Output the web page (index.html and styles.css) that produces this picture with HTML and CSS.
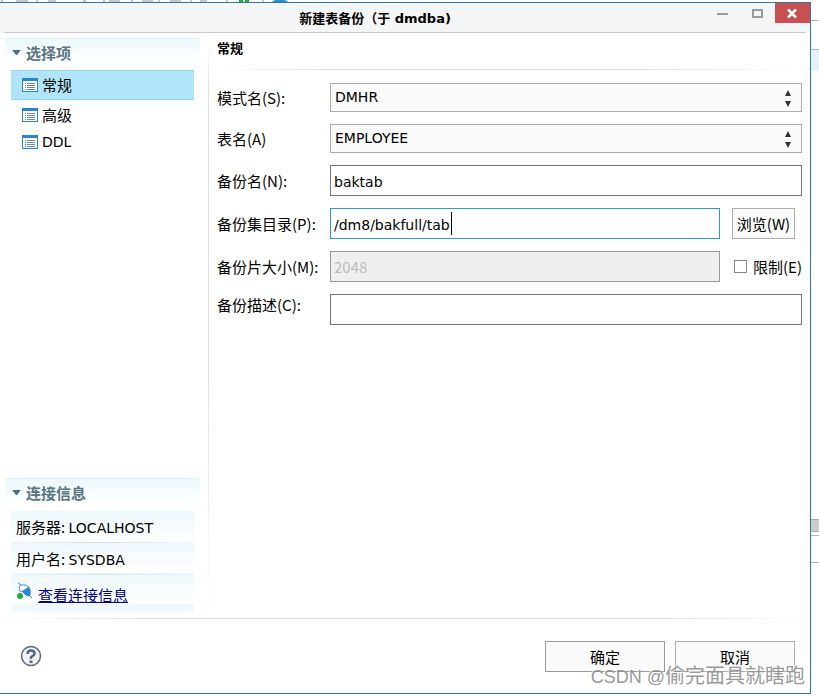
FILE: index.html
```
<!DOCTYPE html>
<html lang="zh-CN">

<head>
    <meta charset="utf-8">
    <title>新建表备份</title>
    <link rel="stylesheet" href="styles.css">
</head>

<body>

    <svg class="toolbar" width="819" height="2" viewBox="0 0 819 2">
        <path d="M2 0v2M37 0v2M104 0v2M132 0v2M159 0v2M191 0v2M227 0v2M263 0v2" stroke="#8a9399" fill="none"/>
        <path d="M16 1h12M48 1h8M83 1h3M109 1h11M142 1h11M170 1h11M200 1h7" stroke="#c9c9c9" stroke-width="2"/>
        <path d="M239 1h4M245 1h4" stroke="#22aa3c" stroke-width="2"/>
        <path d="M272 2q2-2 4-2h8q2 0 4 2z" fill="#2d88dc"/>
    </svg>

    <div class="screen">
        <div class="dialog">

            <div class="titlebar">
                <h1>新建表备份（于 dmdba)</h1>
                <div class="controls">
                    <button type="button" aria-label="最小化"><svg width="35" height="20"><path d="M12 11h11" stroke="#9b9b9d" stroke-width="2"/></svg></button>
                    <button type="button" aria-label="最大化"><svg width="35" height="20"><path d="M13 7h9v7h-9z" fill="none" stroke="#9b9b9d" stroke-width="2"/></svg></button>
                    <button type="button" class="close" aria-label="关闭"><svg width="35" height="20"><path d="M13 6.500l8 8M21 6.500l-8 8" stroke="#fff" stroke-width="2.500"/></svg></button>
                </div>
            </div>

            <div class="main">
                <div class="sidebar">
                    <div class="section">
                        <h2><svg width="9" height="5"><path d="M0 0h9L5 5H4z" fill="#4f7282"/></svg>选择项</h2>
                        <ul class="options">
                            <li class="selected">
                                <svg width="16" height="14"><path d="M0 0h16v14H0z" fill="#2b83d6"/><path d="M1 3h14v10H1z" fill="#fff"/><path d="M3 5.500h1M3 7.500h1M3 9.500h1M3 11.500h1M5 5.500h8M5 7.500h8M5 9.500h8M5 11.500h8" stroke="#7389a0"/></svg>常规
                            </li>
                            <li>
                                <svg width="16" height="14"><path d="M0 0h16v14H0z" fill="#2b83d6"/><path d="M1 3h14v10H1z" fill="#fff"/><path d="M3 5.500h1M3 7.500h1M3 9.500h1M3 11.500h1M5 5.500h8M5 7.500h8M5 9.500h8M5 11.500h8" stroke="#7389a0"/></svg>高级
                            </li>
                            <li class="latin">
                                <svg width="16" height="14"><path d="M0 0h16v14H0z" fill="#2b83d6"/><path d="M1 3h14v10H1z" fill="#fff"/><path d="M3 5.500h1M3 7.500h1M3 9.500h1M3 11.500h1M5 5.500h8M5 7.500h8M5 9.500h8M5 11.500h8" stroke="#7389a0"/></svg>DDL
                            </li>
                        </ul>
                    </div>

                    <div class="section">
                        <h2><svg width="9" height="5"><path d="M0 0h9L5 5H4z" fill="#4f7282"/></svg>连接信息</h2>
                        <div class="connection">
                            <p>服务器: <span class="latin">LOCALHOST</span></p>
                            <p>用户名: <span class="latin">SYSDBA</span></p>
                            <p class="view">
                                <svg width="17" height="18" viewBox="0 0 17 18">
                                    <path d="M2 1l3 2M12 12l4 4" stroke="#2b83d6"/>
                                    <path d="M4 9Q2 4 5 3q5-1 8 2l-7 5z" fill="#fff" stroke="#3c92de"/>
                                    <path d="M6 9l7-4q3 4 1 9-5 1-8-5z" fill="#2b83d6"/>
                                    <circle cx="4" cy="14" r="3" fill="#22aa3c"/>
                                </svg>
                                <a href="#">查看连接信息</a>
                            </p>
                        </div>
                    </div>
                </div>

                <div class="divider"></div>

                <div class="content">
                    <h3>常规</h3>
                    <form class="form">
                        <label for="schema">模式名(S):</label>
                        <div class="select wide">
                            <select id="schema"><option>DMHR</option></select>
                            <svg width="6" height="17"><path d="M3 0l3 6H0zM0 11h6l-3 6z" fill="#333"/></svg>
                        </div>

                        <label for="table">表名(A)</label>
                        <div class="select wide">
                            <select id="table"><option>EMPLOYEE</option></select>
                            <svg width="6" height="17"><path d="M3 0l3 6H0zM0 11h6l-3 6z" fill="#333"/></svg>
                        </div>

                        <label for="name">备份名(N):</label>
                        <input class="wide" id="name" type="text" value="baktab">

                        <label for="path">备份集目录(P):</label>
                        <div class="path">
                            <input class="active" id="path" type="text" value="/dm8/bakfull/tab">
                            <span class="caret"></span>
                        </div>
                        <button type="button" class="browse">浏览(W)</button>

                        <label for="size">备份片大小(M):</label>
                        <input id="size" type="text" value="2048" disabled>
                        <label class="limit"><input type="checkbox">限制(E)</label>

                        <label class="top" for="desc">备份描述(C):</label>
                        <input class="wide" id="desc" type="text">
                    </form>
                </div>
            </div>

            <div class="footer">
                <button type="button" class="help" aria-label="帮助">
                    <svg width="22" height="22" viewBox="0 0 22 22">
                        <circle cx="11" cy="11" r="9.500" fill="#f2f2f3" stroke="#5c6980" stroke-width="1.500"/>
                        <path d="M7.500 9Q7.500 5.500 11 5.500T14.500 8.500Q14.500 10 12.500 11T11 14" fill="none" stroke="#566783" stroke-width="2.500"/>
                        <path d="M9.500 15.500h3V18h-3z" fill="#566783"/>
                    </svg>
                </button>
                <button type="button" class="ok">确定</button>
                <button type="button">取消</button>
            </div>

        </div>

        <div class="behind">
            <div class="tabs"></div>
            <div class="row"></div>
            <div class="scroll"></div>
            <div class="pane"></div>
        </div>
    </div>

    <div class="watermark"><span>CSDN @</span>偷完面具就瞎跑</div>

</body>

</html>
```
FILE: styles.css
```
*{
    box-sizing: border-box;
}

body{
    margin: 0;
    min-height: 100vh;
    display: flex;
    flex-direction: column;
    overflow: hidden;
    background: white;
    color: black;
    font: 15px/22px "Noto Sans CJK SC", sans-serif;
}

h1, h2, h3, p, ul{
    margin: 0;
    padding: 0;
}

button, input, select{
    font: inherit;
    color: inherit;
    margin: 0;
    border-radius: 0;
}

svg{
    display: block;
    flex: none;
}

.toolbar{
    max-width: 100%;
}

.screen{
    flex: 1;
    display: flex;
    padding-bottom: 2px;
}

.dialog{
    flex: 1;
    display: flex;
    flex-direction: column;
    border: 1px solid #2b7d97;
    border-left: 0;
}

/* title bar */

.titlebar{
    display: flex;
    height: 30px;
    padding-left: 45px;
    background: linear-gradient(#c8c8c8, #c8c8c8) 5px 100% / calc(100% - 10px) 1px no-repeat #f4f5f7;
}

.titlebar h1{
    flex: 1;
    text-align: center;
    font: bold 13px/32px "DejaVu Sans", "Noto Sans CJK SC", sans-serif;
}

.controls{
    display: flex;
    align-items: flex-start;
}

.controls button{
    padding: 0;
    border: 0;
    background: none;
}

.controls .close{
    background: #c75050;
}

/* sidebar */

.main{
    flex: 1;
    display: flex;
    padding: 5px 8px 5px 5px;
}

.sidebar{
    width: 195px;
    display: flex;
    flex-direction: column;
    justify-content: space-between;
}

.section h2{
    display: flex;
    align-items: center;
    gap: 5px;
    height: 28px;
    padding: 0 7px;
    border-top: 1px solid #d8f3f8;
    border-radius: 4px;
    background: linear-gradient(#edf9fe, white);
    color: #5a7580;
    font-size: 15px;
    line-height: 22px;
}

.options{
    list-style: none;
    margin: 4px 6px 0;
}

.options li{
    display: flex;
    align-items: center;
    gap: 4px;
    height: 30px;
    padding-left: 11px;
}

.options .selected{
    background: #b0e5f9;
    border: solid #95d9ee;
    border-width: 1px 0;
}

.options .latin{
    height: 24px;
}

.latin{
    font-family: "DejaVu Sans", sans-serif;
    font-size: 14px;
}

.connection{
    margin: 5px 6px 0;
    padding-bottom: 5px;
    background: repeating-linear-gradient(#edf8fe, white 31px);
}

.connection p{
    height: 32px;
    padding: 5px 5px 0;
    border-bottom: 1px solid;
    border-image: linear-gradient(90deg, transparent, #d9dde0 50%, transparent) 1;
}

.connection .view{
    display: flex;
    gap: 5px;
    height: 33px;
    padding-top: 7px;
    border: 0;
}

.view a{
    padding-top: 2px;
    color: #000080;
}

.divider{
    width: 1px;
    margin: 0 8px;
    background: linear-gradient(white, #e0e0e0 10%, #e0e0e0 60%, white);
}

/* form */

.content{
    flex: 1;
}

.content h3{
    height: 32px;
    font-size: 13px;
    line-height: 20px;
    border-bottom: 1px solid;
    border-image: linear-gradient(90deg, transparent, #dedede 20%, #dedede 70%, transparent) 1;
}

.form{
    display: grid;
    grid-template-columns: 101px 1fr 70px;
    gap: 12px;
    align-items: center;
    padding-top: 13px;
}

.form label{
    white-space: nowrap;
}

.form .top{
    align-self: start;
}

.wide{
    grid-column: 2 / 4;
}

.select{
    position: relative;
}

.select select{
    display: block;
    appearance: none;
    width: 100%;
    height: 29px;
    padding: 0 4px 2px;
    border: 1px solid #adadad;
    background: #fafafa;
    font: 14px "DejaVu Sans", sans-serif;
}

.select svg{
    position: absolute;
    right: 11px;
    top: 7px;
    pointer-events: none;
}

input[type=text]{
    display: block;
    width: 100%;
    height: 31px;
    padding: 2px 3px 0;
    border: 1px solid #767676;
    background: white;
    font: 14px "DejaVu Sans", sans-serif;
    outline: 0;
}

input[type=text].wide{
    width: auto;
}

input[type=text].active{
    border-color: #3399bb;
}

input[type=text]:disabled{
    padding-top: 0;
    border-color: #999;
    background: #efefef;
    color: #bbb;
    font: 15px "Noto Sans CJK SC", sans-serif;
}

.path{
    position: relative;
}

.caret{
    position: absolute;
    left: 121px;
    top: 4px;
    width: 1px;
    height: 23px;
    background: black;
}

.browse, .footer button{
    height: 31px;
    padding: 1px 3px 0;
    border: 1px solid #adadad;
    background: #fafafa;
    white-space: nowrap;
}

.browse{
    width: 63px;
}

.form .limit{
    display: flex;
    align-items: center;
    gap: 6px;
    padding-left: 2px;
}

.limit input{
    appearance: none;
    width: 13px;
    height: 13px;
    border: 1px solid #888;
    background: white;
}

/* footer */

.footer{
    display: flex;
    align-items: center;
    gap: 10px;
    height: 75px;
    padding: 0 15px 0 20px;
    border-top: 1px solid;
    border-image: linear-gradient(90deg, transparent, #dedede 20%, #dedede 80%, transparent) 1;
}

.footer button{
    width: 120px;
}

.footer .help{
    width: 22px;
    height: 22px;
    padding: 0;
    border: 0;
    background: none;
}

.footer .ok{
    margin-left: auto;
    border-color: #999;
}

/* window parts that show beside the dialog */

.behind{
    width: 8px;
}

.tabs{
    height: 46px;
    padding-top: 18px;
}

.tabs::before{
    content: "";
    display: block;
    height: 28px;
    border: solid #b0b0b0;
    border-width: 1px 0;
}

.row{
    height: 21px;
    margin-top: 2px;
    background: #e6f1fd;
}

.scroll{
    height: 13px;
    margin-top: 448px;
    border: solid #aaa;
    border-width: 1px 0;
    background: #cdcdcd;
}

.pane{
    height: 28px;
    margin-top: 3px;
    border: solid #b0b0b0;
    border-width: 1px 0;
}

.watermark{
    position: absolute;
    right: 14px;
    bottom: 4px;
    font-size: 20px;
    line-height: 30px;
    color: rgba(140, 140, 140, 0.9);
    text-shadow: -1px -1px 0 rgba(255, 255, 255, 0.7);
    pointer-events: none;
}

.watermark span{
    font-family: "Liberation Sans", sans-serif;
    font-size: 18px;
}
```
